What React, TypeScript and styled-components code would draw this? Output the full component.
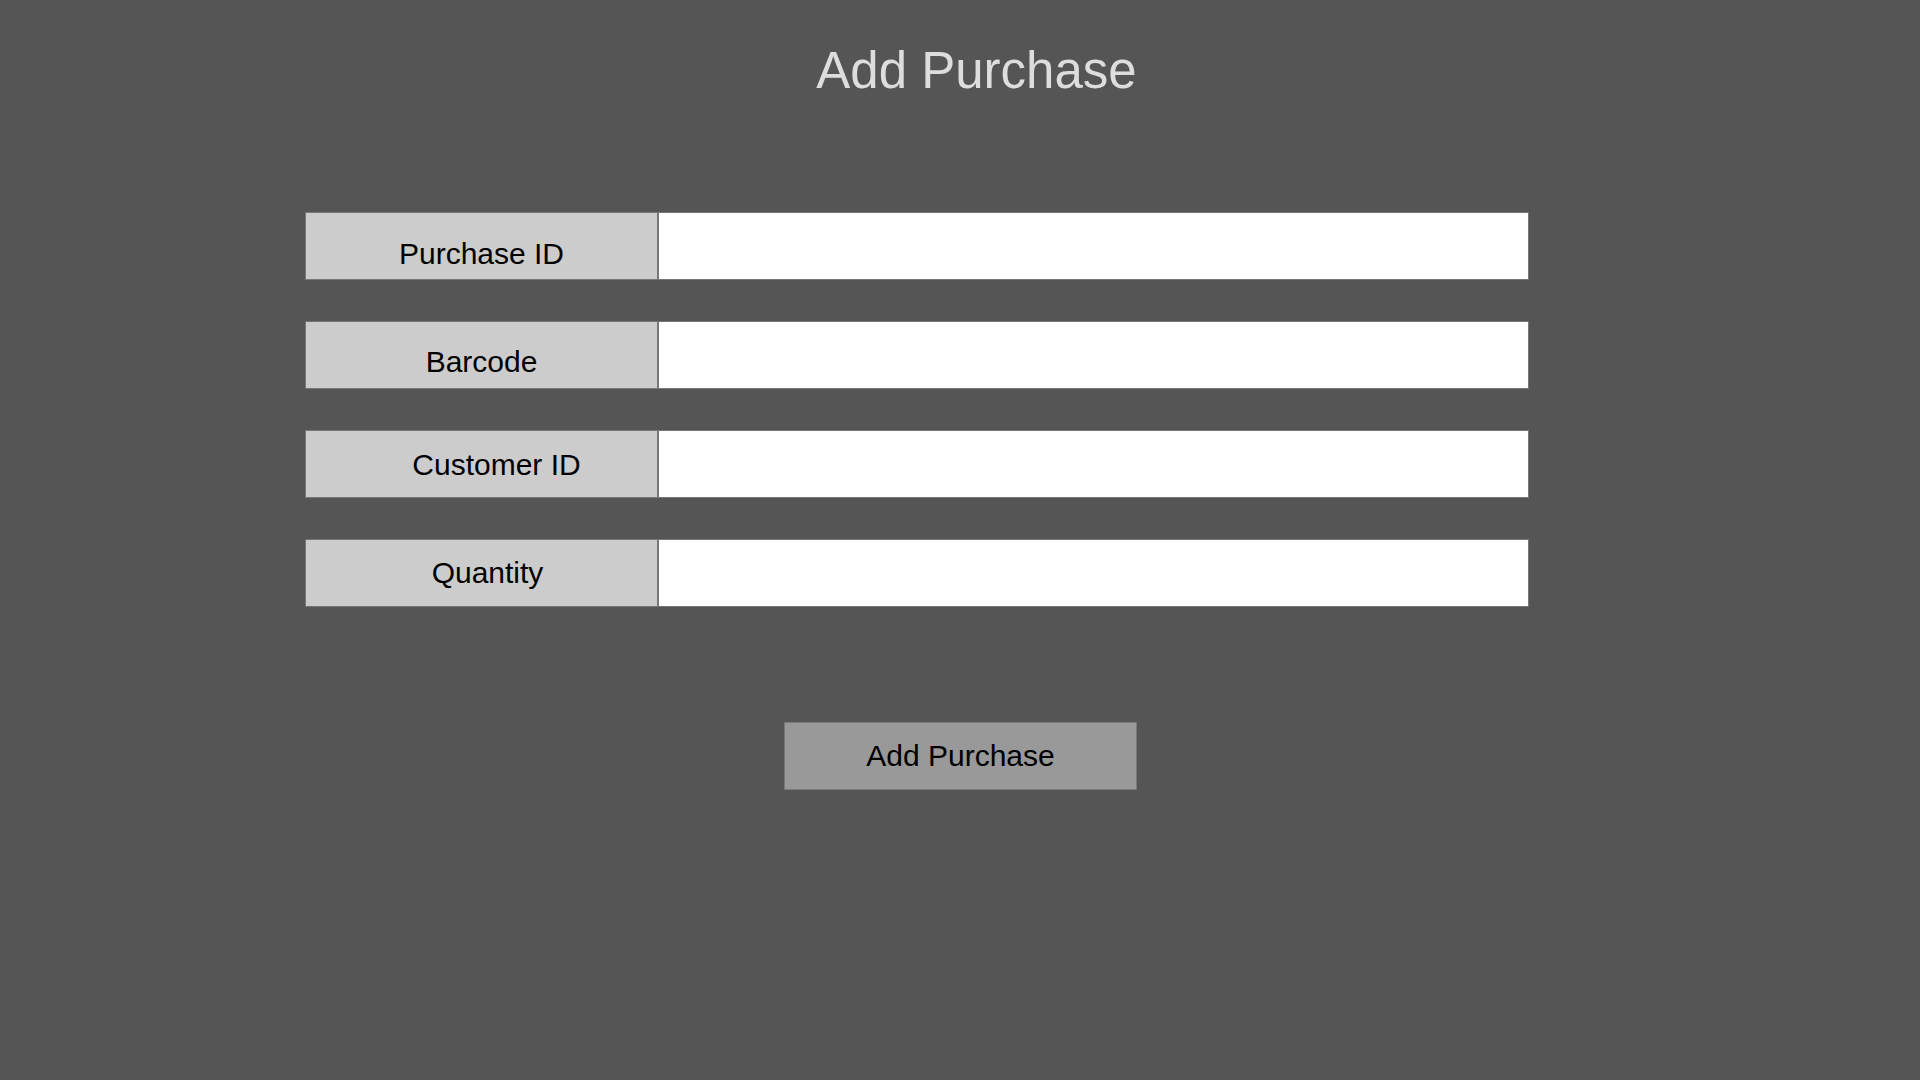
import React from "react";
import styled, { createGlobalStyle } from "styled-components";

const GlobalStyle = createGlobalStyle`
  html, body {
    margin: 0;
    padding: 0;
    background-color: #555555;
    font-family: "Liberation Sans", Arial, Helvetica, sans-serif;
  }
`;

const Page = styled.div`
  display: flex;
  flex-direction: column;
  min-height: 1080px;
  padding-top: 41px;
  box-sizing: border-box;
`;

const Title = styled.h1`
  margin: 0;
  padding-left: 33px;
  text-align: center;
  font-size: 51px;
  line-height: 60px;
  font-weight: normal;
  color: #dddddd;
`;

const Form = styled.form`
  display: flex;
  flex-direction: column;
  gap: 41px;
  margin: 111px 0 0 305px;
  width: 1224px;
`;

const Row = styled.div`
  display: flex;
  flex-direction: row;
  height: 68px;
`;

const Label = styled.label<{ $shiftX?: number; $shiftY?: number }>`
  display: flex;
  align-items: center;
  justify-content: center;
  box-sizing: border-box;
  width: 353px;
  flex-shrink: 0;
  padding-left: ${(p) => (p.$shiftX ?? 0) * 2}px;
  padding-top: ${(p) => (p.$shiftY ?? 0) * 2}px;
  background-color: #cccccc;
  border: 1px solid #777777;
  color: #000000;
  font-size: 30px;
`;

const Field = styled.input`
  flex: 1;
  box-sizing: border-box;
  height: 100%;
  margin: 0;
  padding: 0 12px;
  background-color: #ffffff;
  border: 1px solid #777777;
  border-radius: 0;
  outline: none;
  font-family: inherit;
  font-size: 30px;
`;

const Footer = styled.div`
  display: flex;
  justify-content: center;
  margin-top: 115px;
`;

const SubmitButton = styled.button`
  box-sizing: border-box;
  width: 353px;
  height: 68px;
  margin-left: 1px;
  background-color: #999999;
  border: 1px solid #777777;
  border-radius: 0;
  color: #000000;
  font-family: inherit;
  font-size: 30px;
  cursor: pointer;
`;

const fields = [
  { id: "purchaseId", label: "Purchase ID", shiftX: 0, shiftY: 8 },
  { id: "barcode", label: "Barcode", shiftX: 0, shiftY: 7 },
  { id: "customerId", label: "Customer ID", shiftX: 15, shiftY: 1 },
  { id: "quantity", label: "Quantity", shiftX: 6, shiftY: 0 },
];

const App = () => {
  return (
    <Page>
      <GlobalStyle />
      <Title>Add Purchase</Title>
      <Form onSubmit={(e) => e.preventDefault()}>
        {fields.map((f) => (
          <Row key={f.id}>
            <Label htmlFor={f.id} $shiftX={f.shiftX} $shiftY={f.shiftY}>
              {f.label}
            </Label>
            <Field id={f.id} type="text" />
          </Row>
        ))}
      </Form>
      <Footer>
        <SubmitButton type="button">Add Purchase</SubmitButton>
      </Footer>
    </Page>
  );
};

export default App;
